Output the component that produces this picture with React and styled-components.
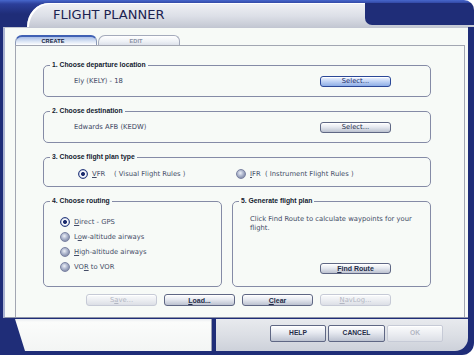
import React from "react";
import styled, { createGlobalStyle } from "styled-components";

const Global = createGlobalStyle`
  html, body { margin: 0; padding: 0; background: #ffffff; }
  body { font-family: "DejaVu Sans", Verdana, sans-serif; }
  * { box-sizing: border-box; }
`;

const NAVY = "#1f2d78";
const BODY = `"DejaVu Sans", Verdana, sans-serif`;
const BOLD = `"Liberation Sans", Arial, sans-serif`;

const Window = styled.div`
  width: 474px;
  height: 355px;
  display: flex;
  flex-direction: column;
  overflow: hidden;
  border-radius: 0 10px 12px 0;
  background: linear-gradient(180deg, #4767cc 0px, #2c3f9a 4px, ${NAVY} 14px);
`;

const TitleBar = styled.div`
  height: 27px;
  display: flex;
  padding: 3px 0 0 27px;
`;

const TitleTab = styled.div`
  flex: 1;
  display: flex;
  align-items: flex-start;
  border-top-left-radius: 22px 24px;
  background: linear-gradient(180deg, #f0f1f5 0%, #dcdfe7 55%, #c4c8d3 100%);
  box-shadow: inset 2px 1px 0 #ffffff;
`;

const Title = styled.h1`
  margin: 0;
  padding: 5px 0 0 26px;
  font-family: ${BODY};
  font-weight: normal;
  font-size: 13px;
  line-height: 14px;
  color: #1c2250;
`;

const TitleCap = styled.div`
  margin-left: auto;
  width: 109px;
  height: 22px;
  background: ${NAVY};
  border-bottom-left-radius: 7px;
`;

const MainPanel = styled.div`
  height: 291px;
  margin: 0 6px 0 3px;
  border-left: 2px solid #aab3d2;
  border-top: 1px solid #c2c6d2;
  border-bottom: 1px solid #8e94a8;
  background: #f7faf7;
  padding: 7px 3px 0 10px;
  display: flex;
  flex-direction: column;
`;

const Tabs = styled.div`
  display: flex;
  gap: 1px;
  height: 10px;
`;

const Tab = styled.div`
  width: 82px;
  height: 10px;
  display: flex;
  align-items: center;
  justify-content: center;
  padding-right: 6px;
  font-family: ${BOLD};
  font-weight: bold;
  font-size: 5.6px;
  letter-spacing: 0.1px;
  border-radius: 7px 6px 0 0;
  color: ${(p) => (p.$active ? "#141c3c" : "#8a90a4")};
  border: 1px solid ${(p) => (p.$active ? "#8d9ab8" : "#a4aabb")};
  border-bottom: none;
  border-top: ${(p) => (p.$active ? "2px solid #3f60b4" : "1px solid #a4aabb")};
  background: ${(p) =>
    p.$active
      ? "linear-gradient(180deg, #a8bde6 0%, #dbe5f5 55%, #ffffff 100%)"
      : "linear-gradient(180deg, #ffffff 0%, #eef1f6 60%, #dde1ea 100%)"};
`;

const ContentPanel = styled.div`
  flex: 1;
  border: 1px solid #a2a6b2;
  border-bottom: none;
  padding: 15px 33px 0 27px;
  display: flex;
  flex-direction: column;
  gap: 10px;
`;

const Section = styled.fieldset`
  margin: 0;
  padding: 0;
  min-width: 0;
  border: 1px solid #858ba6;
  border-radius: 5px;
`;

const Legend = styled.legend`
  margin-left: 6px;
  padding: 0 2px;
  font-family: ${BOLD};
  font-weight: bold;
  font-size: 6.8px;
  line-height: 8px;
  color: #131a30;
`;

const Row = styled.div`
  height: 27px;
  padding: 7px 39px 9px 30px;
  display: flex;
  align-items: center;
  justify-content: space-between;
`;

const Value = styled.span`
  font-family: ${BODY};
  font-size: 6.8px;
  line-height: 11px;
  color: #3c4662;
`;

const TypeRow = styled.div`
  padding: 7px 0 7px 34px;
  display: grid;
  grid-template-columns: 158px auto;
  align-items: center;
`;

const Split = styled.div`
  display: grid;
  grid-template-columns: 179px 199px;
  gap: 10px;
`;

const RadioList = styled.div`
  padding: 11px 0 14px 16px;
  display: flex;
  flex-direction: column;
  gap: 4px;
`;

const Option = styled.label`
  display: flex;
  align-items: center;
  gap: 4px;
  height: 11px;
  font-family: ${BODY};
  font-size: 6.8px;
  color: #444c66;
  white-space: pre;
`;

const Radio = styled.span`
  width: 10px;
  height: 10px;
  flex: none;
  border-radius: 50%;
  border: 1px solid ${(p) => (p.$checked ? "#2e4080" : "#7a82a2")};
  background: ${(p) =>
    p.$checked
      ? "radial-gradient(circle, #15225a 0, #24357a 1.7px, #ffffff 2.3px, #f4f6fb 2.9px, #a9b4d2 3.8px)"
      : "radial-gradient(circle at 42% 38%, #eef1f8 0, #b4bcd2 2.6px, #8e97b2 4.6px)"};
`;

const Generate = styled.div`
  height: 81px;
  padding: 10px 8px 12px 17px;
  display: flex;
  flex-direction: column;
`;

const Info = styled.p`
  margin: 0;
  font-family: ${BODY};
  font-size: 6.8px;
  line-height: 9px;
  color: #424a64;
`;

const ButtonRow = styled.div`
  margin-top: -3px;
  display: flex;
  justify-content: flex-end;
  gap: 7px;
  padding-right: 40px;
`;

const Button = styled.button`
  width: ${(p) => p.$w ?? 71}px;
  height: ${(p) => p.$h ?? 11}px;
  padding: 0;
  margin: 0;
  flex: none;
  display: flex;
  align-items: center;
  justify-content: center;
  border-radius: 3px;
  font-family: ${(p) => (p.$bold ? BOLD : BODY)};
  font-weight: ${(p) => (p.$bold ? "bold" : "normal")};
  font-size: ${(p) => (p.$bold ? "7px" : "6.8px")};
  line-height: 1;
  color: ${(p) =>
    p.$variant === "disabled" ? "#b2b6c2" : p.$variant === "focus" ? "#1c2c66" : "#242c48"};
  border: 1px solid
    ${(p) =>
      p.$variant === "disabled" ? "#c6cad6" : p.$variant === "focus" ? "#2b4898" : "#5f6784"};
  background: ${(p) =>
    p.$variant === "disabled"
      ? "linear-gradient(180deg, #fafbfc 0%, #eceef2 50%, #dcdfe6 100%)"
      : p.$variant === "focus"
      ? "linear-gradient(180deg, #f2f6ff 0%, #c4d6f6 45%, #8eaee6 100%)"
      : "linear-gradient(180deg, #ffffff 0%, #e6e9f0 45%, #bcc2d0 100%)"};
  box-shadow: inset 0 1px 0 #ffffff;
`;

const FindButton = styled(Button)`
  align-self: flex-end;
  margin: auto 31px 0 0;
`;

const DialogButton = styled(Button)`
  border-radius: 2px;
  font-size: 6.7px;
`;

const BottomBar = styled.div`
  height: 33px;
  display: flex;
  padding-top: 1px;
`;

const StatusBox = styled.div`
  width: 216px;
  padding-left: 15px;
  display: flex;
`;

const StatusField = styled.div`
  flex: 1;
  margin-right: 4px;
  background: linear-gradient(180deg, #e9ecf0 0, #fbfcfb 3px, #f3f5f4 100%);
  border-right: 1px solid #9aa0b4;
  clip-path: polygon(0 0, 100% 0, 100% 100%, 10px 100%);
  border-bottom-left-radius: 4px;
`;

const DialogArea = styled.div`
  flex: 1;
  margin-right: 6px;
  border-bottom-right-radius: 13px;
  background: linear-gradient(180deg, #e8eaee 0%, #dcdfe5 50%, #cdd1da 100%);
  display: flex;
  align-items: center;
  justify-content: flex-end;
  gap: 2px;
  padding: 0 25px 4px 0;
`;

export default function App() {
  return (
    <>
      <Global />
      <Window>
        <TitleBar>
          <TitleTab>
            <Title>FLIGHT PLANNER</Title>
            <TitleCap />
          </TitleTab>
        </TitleBar>
        <MainPanel>
          <Tabs>
            <Tab $active>CREATE</Tab>
            <Tab>EDIT</Tab>
          </Tabs>
          <ContentPanel>
            <Section>
              <Legend>1. Choose departure location</Legend>
              <Row>
                <Value>Ely (KELY) - 18</Value>
                <Button $variant="focus">Select...</Button>
              </Row>
            </Section>
            <Section>
              <Legend>2. Choose destination</Legend>
              <Row>
                <Value>Edwards AFB (KEDW)</Value>
                <Button>Select...</Button>
              </Row>
            </Section>
            <Section>
              <Legend>3. Choose flight plan type</Legend>
              <TypeRow>
                <Option>
                  <Radio $checked />
                  <span><u>V</u>FR    ( Visual Flight Rules )</span>
                </Option>
                <Option>
                  <Radio />
                  <span><u>I</u>FR  ( Instrument Flight Rules )</span>
                </Option>
              </TypeRow>
            </Section>
            <Split>
              <Section>
                <Legend>4. Choose routing</Legend>
                <RadioList>
                  <Option>
                    <Radio $checked />
                    <span><u>D</u>irect - GPS</span>
                  </Option>
                  <Option>
                    <Radio />
                    <span>L<u>o</u>w-altitude airways</span>
                  </Option>
                  <Option>
                    <Radio />
                    <span><u>H</u>igh-altitude airways</span>
                  </Option>
                  <Option>
                    <Radio />
                    <span>VO<u>R</u> to VOR</span>
                  </Option>
                </RadioList>
              </Section>
              <Section>
                <Legend>5. Generate flight plan</Legend>
                <Generate>
                  <Info>Click Find Route to calculate waypoints for your flight.</Info>
                  <FindButton $bold>
                    <span><u>F</u>ind Route</span>
                  </FindButton>
                </Generate>
              </Section>
            </Split>
            <ButtonRow>
              <Button $h={12} $variant="disabled">
                <span>S<u>a</u>ve...</span>
              </Button>
              <Button $h={12} $bold>
                <span><u>L</u>oad...</span>
              </Button>
              <Button $h={12} $bold>
                <span><u>C</u>lear</span>
              </Button>
              <Button $h={12} $variant="disabled">
                <span><u>N</u>avLog...</span>
              </Button>
            </ButtonRow>
          </ContentPanel>
        </MainPanel>
        <BottomBar>
          <StatusBox>
            <StatusField />
          </StatusBox>
          <DialogArea>
            <DialogButton $w={56} $h={17} $bold>HELP</DialogButton>
            <DialogButton $w={57} $h={17} $bold>CANCEL</DialogButton>
            <DialogButton $w={56} $h={17} $bold $variant="disabled">OK</DialogButton>
          </DialogArea>
        </BottomBar>
      </Window>
    </>
  );
}
